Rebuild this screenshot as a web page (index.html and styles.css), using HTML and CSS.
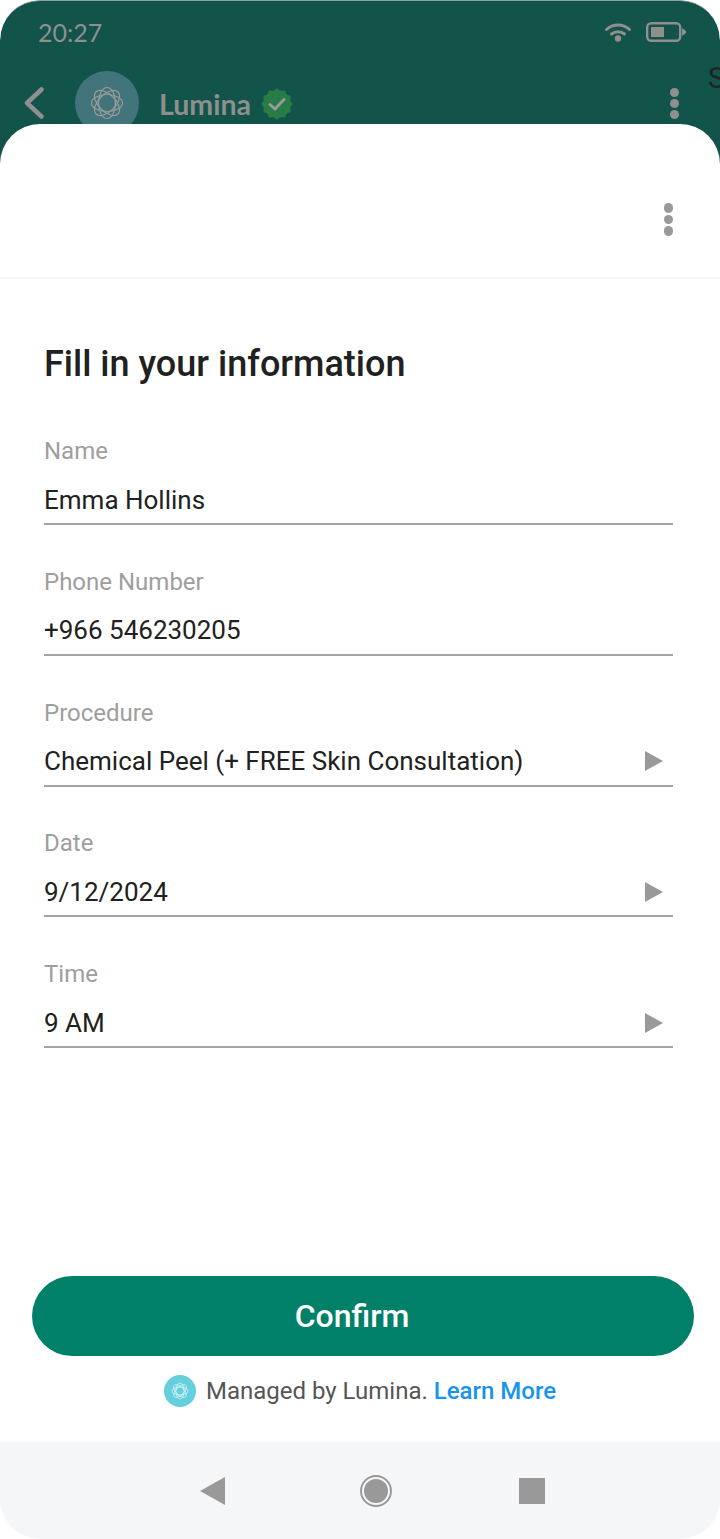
FILE: index.html
```html
<!DOCTYPE html>
<html lang="en">
<head>
    <meta charset="UTF-8">
    <meta name="viewport" content="width=device-width, initial-scale=1.0">
    <title>Fill in your information</title>
    <link rel="stylesheet" href="styles.css">
</head>
<body>
    <div class="phone">
        <div class="topbar">
            <div class="status">
                <span class="time">20:27</span>
                <div class="status-icons">
                    <svg class="wifi" width="28" height="20" viewBox="0 0 28 20">
                        <path d="M2.500 7.500C9 1.500 19 1.500 25.500 7.500" fill="none" stroke="#8f8f8f" stroke-width="3" stroke-linecap="round"/>
                        <path d="M7.500 12C11 9 17 9 20.500 12" fill="none" stroke="#8f8f8f" stroke-width="3" stroke-linecap="round"/>
                        <circle cx="14" cy="16.500" r="3.200" fill="#8f8f8f"/>
                    </svg>
                    <svg class="battery" width="40" height="20" viewBox="0 0 40 20">
                        <rect x="1.200" y="1.200" width="33" height="17.600" rx="4" fill="none" stroke="#8f8f8f" stroke-width="2.400"/>
                        <rect x="5" y="5" width="13" height="10" fill="#8f8f8f"/>
                        <path d="M36 6L40 9A1 1 0 0 1 40 11L36 14Z" fill="#8f8f8f"/>
                    </svg>
                </div>
            </div>
            <div class="chat-head">
                <svg class="back" width="20" height="32" viewBox="0 0 20 32">
                    <path d="M17.500 2.500L3 16L17.500 29.500" fill="none" stroke="#8f8f8f" stroke-width="4.500" stroke-linecap="round" stroke-linejoin="round"/>
                </svg>
                <div class="avatar">
                    <svg width="36" height="36" viewBox="-18 -18 36 36" fill="none" stroke="#9a9a9a" stroke-width="1.200">
                        <ellipse rx="15.500" ry="8.500"/>
                        <ellipse rx="15.500" ry="8.500" transform="rotate(45)"/>
                        <ellipse rx="15.500" ry="8.500" transform="rotate(90)"/>
                        <ellipse rx="15.500" ry="8.500" transform="rotate(135)"/>
                    </svg>
                </div>
                <span class="chat-name">Lumina</span>
                <svg class="verified" width="32" height="32" viewBox="-16 -16 32 32">
                    <circle r="14" fill="#277c48"/>
                    <g fill="#277c48">
                        <circle cx="0" cy="-13.500" r="2"/><circle cx="6.800" cy="-11.700" r="2"/>
                        <circle cx="11.700" cy="-6.800" r="2"/><circle cx="13.500" cy="0" r="2"/>
                        <circle cx="11.700" cy="6.800" r="2"/><circle cx="6.800" cy="11.700" r="2"/>
                        <circle cx="0" cy="13.500" r="2"/><circle cx="-6.800" cy="11.700" r="2"/>
                        <circle cx="-11.700" cy="6.800" r="2"/><circle cx="-13.500" cy="0" r="2"/>
                        <circle cx="-11.700" cy="-6.800" r="2"/><circle cx="-6.800" cy="-11.700" r="2"/>
                    </g>
                    <path d="M-7 0.500L-2 5L7 -4.500" fill="none" stroke="#9a9a9a" stroke-width="3" stroke-linecap="round" stroke-linejoin="round"/>
                </svg>
                <div class="dots dots-head"><i></i><i></i><i></i></div>
            </div>
            <span class="peek">S</span>
        </div>

        <div class="sheet">
            <div class="sheet-head">
                <div class="dots dots-sheet"><i></i><i></i><i></i></div>
            </div>
            <form class="form">
                <h1>Fill in your information</h1>
                <div class="field">
                    <div class="label">Name</div>
                    <div class="value">Emma Hollins</div>
                </div>
                <div class="field">
                    <div class="label">Phone Number</div>
                    <div class="value">+966 546230205</div>
                </div>
                <div class="field">
                    <div class="label">Procedure</div>
                    <div class="value">Chemical Peel (+ FREE Skin Consultation)<span class="arrow"></span></div>
                </div>
                <div class="field">
                    <div class="label">Date</div>
                    <div class="value">9/12/2024<span class="arrow"></span></div>
                </div>
                <div class="field">
                    <div class="label">Time</div>
                    <div class="value">9 AM<span class="arrow"></span></div>
                </div>
            </form>
            <div class="actions">
                <button type="button" class="button">Confirm</button>
                <div class="managed">
                    <span class="mini-logo">
                        <svg width="18" height="18" viewBox="-18 -18 36 36" fill="none" stroke="#ffffff" stroke-opacity="0.75" stroke-width="1.500">
                            <ellipse rx="16" ry="8"/>
                            <ellipse rx="16" ry="8" transform="rotate(45)"/>
                            <ellipse rx="16" ry="8" transform="rotate(90)"/>
                            <ellipse rx="16" ry="8" transform="rotate(135)"/>
                        </svg>
                    </span>
                    <span>Managed by Lumina. <a class="learn">Learn More</a></span>
                </div>
            </div>
        </div>

        <div class="navbar">
            <svg width="25" height="28" viewBox="0 0 25 28"><path d="M25 0V28L0 14Z" fill="#999999"/></svg>
            <svg class="nav-home" width="32" height="32" viewBox="0 0 32 32">
                <circle cx="16" cy="16" r="15" fill="none" stroke="#999999" stroke-width="2"/>
                <circle cx="16" cy="16" r="12" fill="#999999"/>
            </svg>
            <span class="nav-square"></span>
        </div>
    </div>
</body>
</html>
```

FILE: styles.css
```css
body {
    margin: 0;
    background-color: #ffffff;
    font-family: Roboto, Arial, sans-serif;
}
.phone {
    width: 720px;
    height: 1539px;
    display: flex;
    flex-direction: column;
    overflow: hidden;
    background-color: #ffffff;
    border-radius: 40px;
}
.topbar {
    position: relative;
    height: 163px;
    flex-shrink: 0;
    background-color: #12534a;
    border-top: 1px solid #8aa39f;
    border-radius: 40px 40px 0 0;
    overflow: hidden;
}
.status {
    display: flex;
    justify-content: space-between;
    align-items: center;
    padding: 19px 34px 0 38px;
    height: 24px;
}
.time {
    font-family: Lato, sans-serif;
    font-size: 25px;
    color: #8f8f8f;
}
.status-icons {
    display: flex;
    align-items: center;
    gap: 14px;
}
.chat-head {
    display: flex;
    align-items: center;
    height: 64px;
    padding: 27px 0 0 24px;
}
.back {
    margin-right: 31px;
}
.avatar {
    width: 64px;
    height: 64px;
    border-radius: 50%;
    background-color: #42757b;
    display: flex;
    align-items: center;
    justify-content: center;
    flex-shrink: 0;
}
.chat-name {
    margin: 2px 0 0 20px;
    font-family: Lato, sans-serif;
    font-size: 28.500px;
    font-weight: 700;
    color: #8f8f8f;
}
.verified {
    margin: 2px 0 0 10px;
}
.dots {
    display: flex;
    flex-direction: column;
}
.dots i {
    display: block;
    border-radius: 50%;
}
.dots-head {
    margin-left: auto;
    margin-right: 41px;
    gap: 2px;
}
.dots-head i {
    width: 9px;
    height: 9px;
    background-color: #8f8f8f;
}
.peek {
    position: absolute;
    left: 708px;
    top: 60px;
    font-size: 29px;
    color: #222222;
}
.sheet {
    flex: 1;
    margin-top: -40px;
    position: relative;
    display: flex;
    flex-direction: column;
    background-color: #ffffff;
    border-radius: 40px 40px 0 0;
}
.sheet-head {
    height: 74px;
    flex-shrink: 0;
    display: flex;
    justify-content: flex-end;
    align-items: flex-start;
    padding: 79px 47px 0 0;
    border-bottom: 2px solid #f6f6f6;
}
.dots-sheet {
    gap: 2px;
}
.dots-sheet i {
    width: 9.500px;
    height: 9.500px;
    background-color: #999999;
}
.form {
    padding: 65px 47px 0 44px;
    flex: 1;
}
h1 {
    margin: 0 0 53px;
    font-size: 36px;
    line-height: 40px;
    font-weight: 500;
    color: #212121;
}
.field {
    margin-bottom: 42.750px;
}
.label {
    font-size: 24px;
    line-height: 28px;
    color: #9e9e9e;
}
.value {
    display: flex;
    justify-content: space-between;
    align-items: center;
    height: 60px;
    box-sizing: border-box;
    padding: 11px 10px 0 0;
    font-size: 26px;
    color: #212121;
    border-bottom: 2px solid #a3a3a3;
}
.arrow {
    width: 0;
    height: 0;
    border-left: 18px solid #999999;
    border-top: 10.500px solid transparent;
    border-bottom: 10.500px solid transparent;
}
.actions {
    padding: 0 26px 0 32px;
}
.button {
    display: block;
    width: 100%;
    height: 80px;
    border: none;
    border-radius: 40px;
    background-color: #008069;
    color: #ffffff;
    font-family: Roboto, Arial, sans-serif;
    font-size: 32px;
    font-weight: 500;
    padding: 0 22px 0 0;
}
.managed {
    display: flex;
    justify-content: center;
    align-items: center;
    gap: 10px;
    height: 70px;
    padding: 0 6px 16px 0;
    font-size: 24px;
    color: #555555;
}
.mini-logo {
    width: 32px;
    height: 32px;
    border-radius: 50%;
    background-color: #65cfdd;
    display: flex;
    align-items: center;
    justify-content: center;
}
.learn {
    color: #1694f0;
    font-weight: 500;
}
.navbar {
    height: 97px;
    flex-shrink: 0;
    display: flex;
    align-items: center;
    background-color: #f5f6f8;
    padding-left: 200px;
}
.nav-home {
    margin-left: 135px;
}
.nav-square {
    width: 26px;
    height: 26px;
    margin-left: 127px;
    background-color: #999999;
}
```
